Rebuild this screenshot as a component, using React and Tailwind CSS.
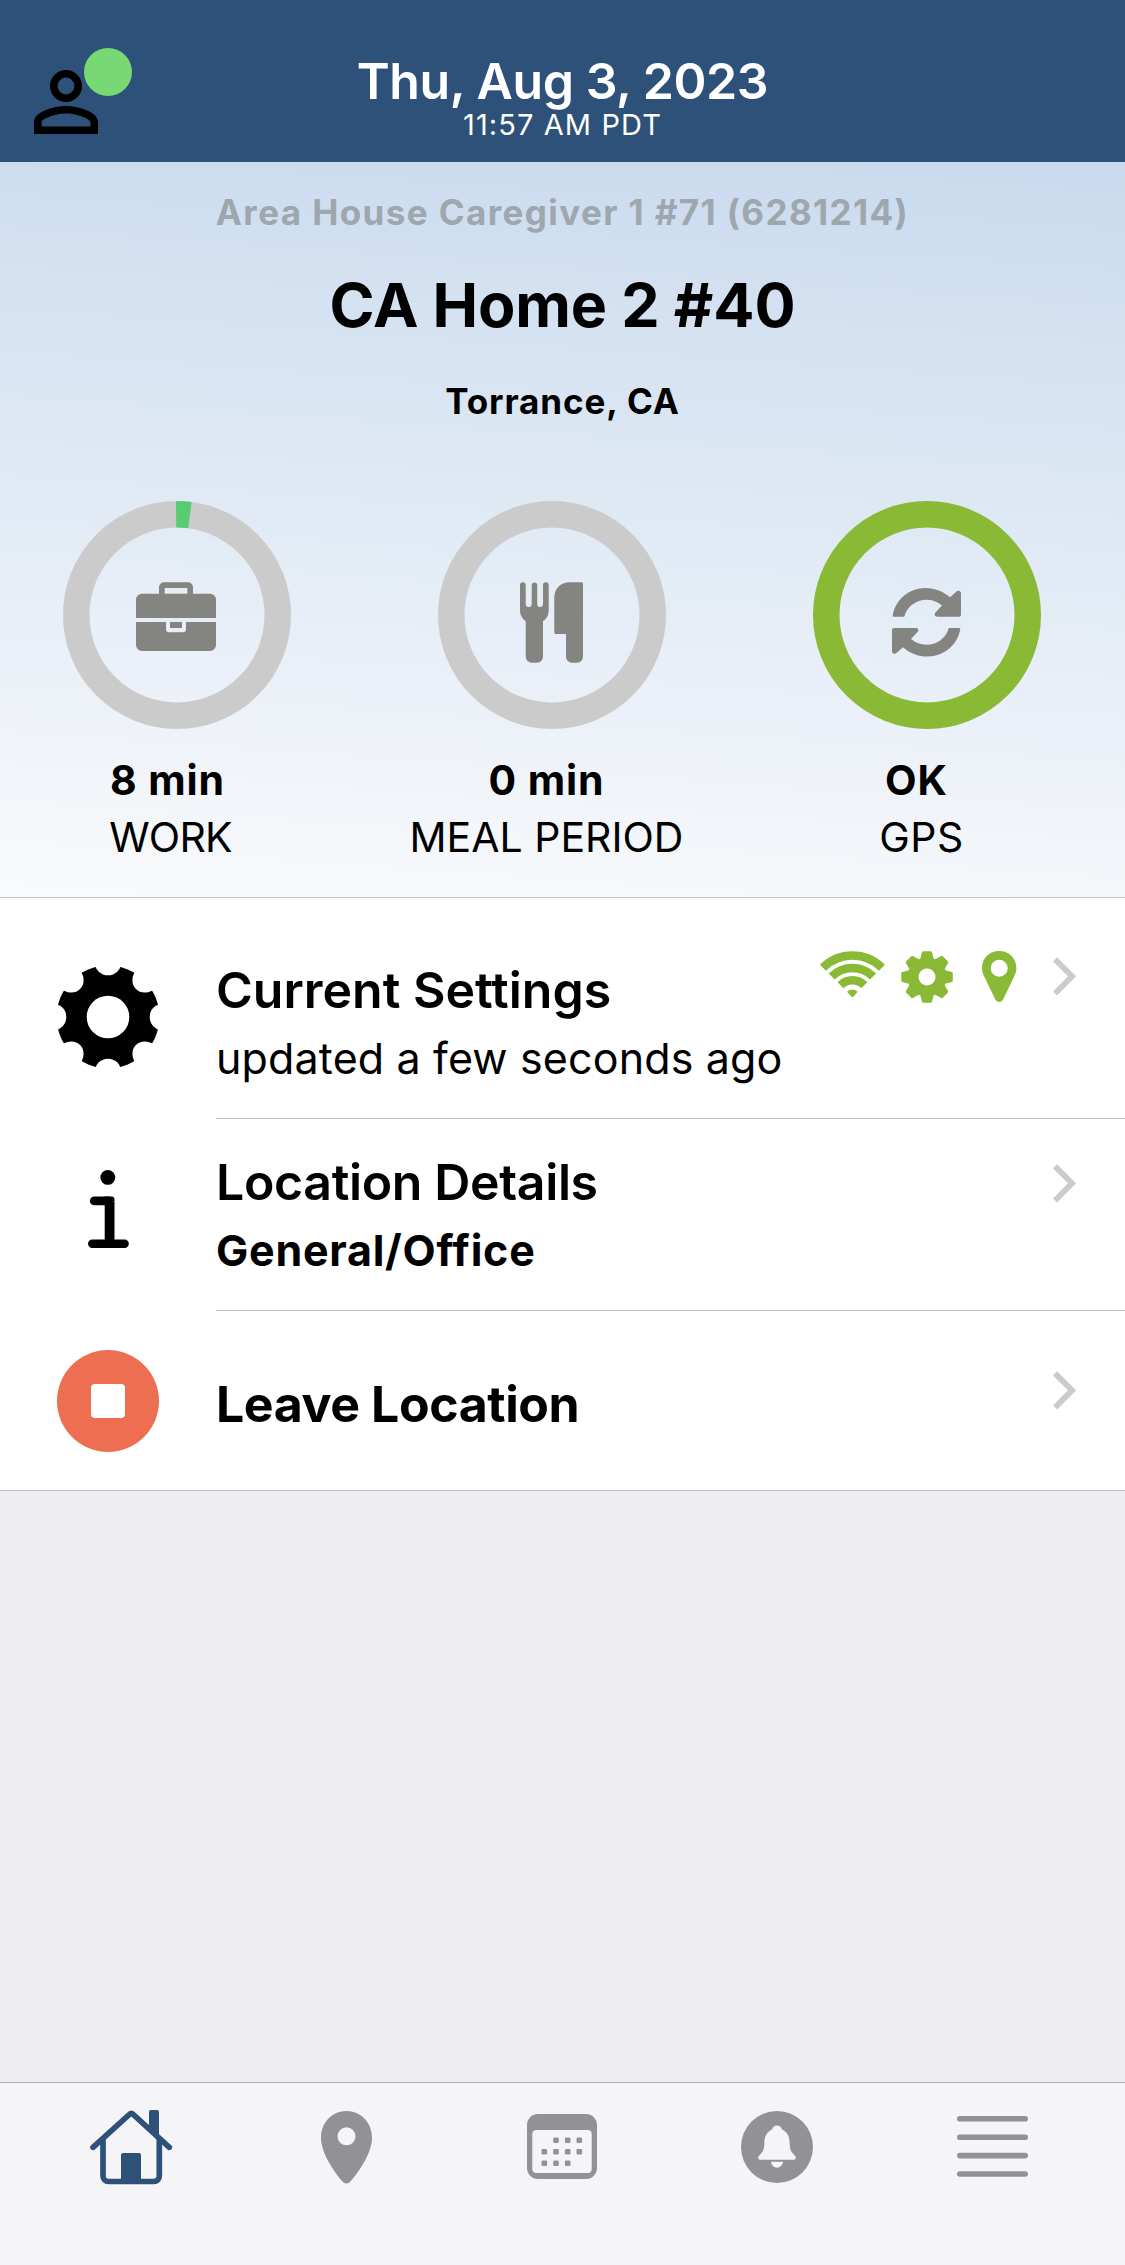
import { MdPersonOutline } from "react-icons/md";

const TEETH = [0, 45, 90, 135, 180, 225, 270, 315];

function BriefcaseShape() {
  return (
    <g fill="#848481">
      <path d="M96 93V86a5 5 0 0 1 5-4.7H125a5 5 0 0 1 5 4.7V93H124.3V87H101.7V93Z" />
      <path d="M73 117V99a6 6 0 0 1 6-6.3H147a6 6 0 0 1 6 6.3V117Z" />
      <path d="M73 121H103V128.3a3 3 0 0 0 3 3H120a3 3 0 0 0 3-3V121H153V144a6 6 0 0 1-6 6H79a6 6 0 0 1-6-6Z" />
      <rect x="107" y="121" width="12" height="6" />
    </g>
  );
}

function CutleryShape() {
  return (
    <g fill="#848481">
      <path d="M82 84.2a2.85 2.85 0 0 1 5.7 0V103a3 3 0 0 0 6 0V84.2a2.75 2.75 0 0 1 5.5 0V103a2.9 2.9 0 0 0 5.8 0V84.2a2.85 2.85 0 0 1 5.7 0V109C110.7 114.5 108.5 118 105 120V155.7a6 6 0 0 1-6 6H93.7a6 6 0 0 1-6-6V120C84.5 118 82 114.5 82 109Z" />
      <path d="M116.3 97C116.3 88 122 81.3 132 81.3H143.5a1.5 1.5 0 0 1 1.5 1.5V155.7a6 6 0 0 1-6 6H134a6 6 0 0 1-6-6V133H117.8a1.5 1.5 0 0 1-1.5-1.5Z" />
    </g>
  );
}

function SyncShape() {
  const half = "M79.7 114.5C82.5 98.5 96 87 112.5 87C122 87 130.5 90.5 137 96.3L143.8 90.3C145.5 89 148 90 148 92.5V113.7a2 2 0 0 1-2 2H124.5C121.8 115.7 120.8 113.5 122.5 111.6L129 104.5C124.5 100.7 119.5 98.8 113.5 98.8C103 98.8 94 105.5 91.2 115.7H80.7a1 1 0 0 1-1-1.2Z";
  return (
    <g fill="#848481">
      <path d={half} />
      <path d={half} transform="rotate(180 113.5 121.3)" />
    </g>
  );
}

function Ring({ color, progress, children }) {
  const length = 2 * Math.PI * 100.75;
  return (
    <svg className="w-[228px] h-[228px]" viewBox="0 0 228 228" fill="none">
      <circle cx="114" cy="114" r="100.75" stroke={color} strokeWidth="26.5" />
      {progress > 0 && (
        <circle cx="114" cy="114" r="100.75" stroke="#58cb73" strokeWidth="26.5" strokeDasharray={`${length * progress} ${length}`} transform="rotate(-90.5 114 114)" />
      )}
      {children}
    </svg>
  );
}

function BigGear() {
  return (
    <svg className="w-[104px] h-[104px]" viewBox="-52 -52 104 104">
      <mask id="gear-notches" maskUnits="userSpaceOnUse" x="-52" y="-52" width="104" height="104">
        <circle r="51.4" fill="white" />
        <circle r="21.3" fill="black" />
        {TEETH.map((a) => (
          <ellipse key={a} cx="0" cy="-54" rx="13" ry={a % 90 === 0 ? 12.3 : 14.5} fill="black" transform={`rotate(${a})`} />
        ))}
      </mask>
      <rect x="-52" y="-52" width="104" height="104" fill="black" mask="url(#gear-notches)" />
    </svg>
  );
}

function InfoIcon() {
  return (
    <svg className="w-[41px] h-[78px]" viewBox="0 0 41 78" fill="none" stroke="black">
      <circle cx="19.8" cy="7.4" r="7.4" fill="black" stroke="none" />
      <path d="M6.2 30.9H20.5" strokeWidth="8.6" strokeLinecap="round" />
      <path d="M21.6 74V31.5" strokeWidth="9.8" />
      <path d="M16.7 30.9V26.6H23.5a3 3 0 0 1 3 3V31.5Z" fill="black" stroke="none" />
      <path d="M4.2 73.8H36.6" strokeWidth="8.4" strokeLinecap="round" />
    </svg>
  );
}

function StopIcon() {
  return (
    <div className="w-[102px] h-[102px] rounded-full bg-[#ed6e51] flex items-center justify-center">
      <div className="w-[34px] h-[34px] rounded bg-white"></div>
    </div>
  );
}

function Chevron() {
  return (
    <svg className="w-[23px] h-[39px]" viewBox="0 0 23 39" fill="none">
      <path d="M2 2.3L19 19.3L2 36.5" stroke="#cbcbcb" strokeWidth="5.8" />
    </svg>
  );
}

function StatusIcons() {
  return (
    <div className="flex text-[#89b935]">
      <svg className="w-[65px] h-[51px]" viewBox="0 0 65 51" fill="none" stroke="currentColor" strokeWidth="8.5">
        <path d="M2.9 16.7A41.7 41.7 0 0 1 61.9 16.7" />
        <path d="M11.7 25.5A29.3 29.3 0 0 1 53.1 25.5" />
        <path d="M20.5 34.3A16.8 16.8 0 0 1 44.3 34.3" />
        <path d="M27 40.8Q32.4 36 37.8 40.8L33.2 45.7Q32.4 46.4 31.6 45.7Z" fill="currentColor" stroke="none" />
      </svg>
      <svg className="w-[52px] h-[52px] ml-4" viewBox="-26 -26 52 52">
        <circle r="14" fill="none" stroke="currentColor" strokeWidth="11" />
        {TEETH.map((a) => (
          <path key={a} d="M-7 -17L-5 -24.8Q-4.8 -25.8 -3.5 -25.8H3.5Q4.8 -25.8 5 -24.8L7 -17Z" fill="currentColor" transform={`rotate(${a})`} />
        ))}
      </svg>
      <svg className="w-[35px] h-[52px] ml-[29px]" viewBox="0 0 35 52">
        <path fill="currentColor" fillRule="evenodd" d="M17.2 0C7.5 0 0 7.3 0 17C0 20 .7 22.3 2 25L13.3 48.5C14.9 51.8 19.5 51.8 21.1 48.5L32.4 25C33.7 22.3 34.4 20 34.4 17C34.4 7.3 26.9 0 17.2 0ZM17.2 8.7a8.5 8.5 0 1 1 0 17a8.5 8.5 0 1 1 0-17Z" />
      </svg>
    </div>
  );
}

function HomeIcon() {
  return (
    <svg className="w-[86px] h-20 mt-px" viewBox="0 0 86 80" fill="none" stroke="#2d5179" strokeWidth="5.7">
      <path d="M5 40.3L41.3 7.5Q43.3 5.5 45.3 7.5L81.3 40.3" strokeLinecap="round" />
      <path d="M15 31V69a5.5 5.5 0 0 0 5.5 5.5H65.8a5.5 5.5 0 0 0 5.5-5.5V31" />
      <path d="M61 24V5a2 2 0 0 1 2-2H69a2 2 0 0 1 2 2V32Z" fill="#2d5179" stroke="none" />
      <path d="M33 75V48a2 2 0 0 1 2-2H51a2 2 0 0 1 2 2V75Z" fill="#2d5179" stroke="none" />
    </svg>
  );
}

function PinIcon() {
  return (
    <svg className="w-[51px] h-[73px] mt-[4.5px]" viewBox="0 0 51 73">
      <path fill="#929294" fillRule="evenodd" d="M25.5 0C11 0 0 11.5 0 27C0 41 12 60 22.3 71.2Q25.5 74 28.7 71.2C39 60 51 41 51 27C51 11.5 40 0 25.5 0ZM25.5 16.3a9 9 0 1 1 0 18a9 9 0 1 1 0-18Z" />
    </svg>
  );
}

function CalendarIcon() {
  const rows = [[29, 40.7, 52.3], [17.3, 29, 40.7, 52.3], [17.3, 29, 40.7]];
  return (
    <svg className="w-[70px] h-[65px] mt-2" viewBox="0 0 70 65" fill="#929294">
      <rect width="70" height="65" rx="11" />
      <rect x="5.3" y="16" width="59.4" height="43" rx="4" fill="#f5f5f8" />
      {rows.map((xs, r) => xs.map((x) => (
        <rect key={`${r}-${x}`} x={x - 2.8} y={23.5 + r * 11.5} width="5.6" height="5.6" rx="1.3" />
      )))}
    </svg>
  );
}

function BellIcon() {
  return (
    <svg className="w-[72px] h-[72px] mt-[4.5px]" viewBox="0 0 72 72">
      <circle cx="36" cy="36" r="36" fill="#929294" />
      <path fill="#f5f5f8" d="M36 14.5C33.5 14.5 32 15.7 30.8 18.5C26 21 23.6 25 23.4 31C23.3 38 22.5 40.5 18.5 44.2C16.5 46 16.8 48.7 19 48.7H53C55.2 48.7 55.5 46 53.5 44.2C49.5 40.5 48.7 38 48.6 31C48.4 25 46 21 41.2 18.5C40 15.7 38.5 14.5 36 14.5Z" />
      <path fill="#f5f5f8" d="M30 50.8H42C41.5 54.5 39 56.7 36 56.7C33 56.7 30.5 54.5 30 50.8Z" />
    </svg>
  );
}

function MenuIcon() {
  return (
    <svg className="w-[71px] h-[61px] mt-2.5 ml-px" viewBox="0 0 71 61" stroke="#929294" strokeWidth="5.6" strokeLinecap="round">
      <path d="M2.8 2.8H68.2M2.8 21.2H68.2M2.8 39.6H68.2M2.8 58H68.2" />
    </svg>
  );
}

const gauges = [
  { value: "8 min", label: "WORK", color: "#cbcbcb", progress: 0.022, icon: <BriefcaseShape />, valueClass: "pr-2", labelClass: "pr-0.5 tracking-[-0.8px]" },
  { value: "0 min", label: "MEAL PERIOD", color: "#cbcbcb", progress: 0, icon: <CutleryShape />, valueClass: "", labelClass: "" },
  { value: "OK", label: "GPS", color: "#89b935", progress: 0, icon: <SyncShape />, valueClass: "pr-2.5", labelClass: "tracking-[0.5px]" },
];

const tabs = [HomeIcon, PinIcon, CalendarIcon, BellIcon, MenuIcon];

export default function App() {
  return (
    <div className="flex flex-col w-full h-[2265px] bg-[#eeeef2] text-black font-['Inter','Liberation_Sans',sans-serif]">
      <header className="grid grid-cols-[1fr_auto_1fr] h-[162px] bg-[#2d5179]">
        <div className="pl-[18px] pt-[54px]">
          <div className="relative w-24 h-24">
            <MdPersonOutline className="w-24 h-24" />
            <span className="absolute left-[66px] -top-1.5 w-12 h-12 rounded-full bg-[#77d874]"></span>
          </div>
        </div>
        <div className="pt-14 text-center text-white">
          <h1 className="text-[50px] leading-[50px] font-semibold tracking-[-0.4px]">Thu, Aug 3, 2023</h1>
          <p className="text-[29px] leading-[37px] tracking-[1.1px]">11:57 AM PDT</p>
        </div>
      </header>

      <section className="h-[736px] pt-7 border-b border-[#c4c5c7] bg-[linear-gradient(184deg,#c9daee_0%,#dfe9f4_46%,#e9eff8_66%,#f9fafb_100%)]">
        <div className="text-center font-bold">
          <p className="text-[35px] leading-[45px] tracking-[1.4px] text-[#9ea6ae]">Area House Caregiver 1 #71 (6281214)</p>
          <h2 className="mt-8 text-[61px] leading-[76px] tracking-[-0.15px]">CA Home 2 #40</h2>
          <p className="mt-9 text-[35px] leading-[45px] tracking-[0.9px]">Torrance, CA</p>
        </div>
        <div className="grid grid-cols-3 mt-[77px]">
          {gauges.map((g) => (
            <div key={g.label}>
              <div className="pl-[63px]">
                <Ring color={g.color} progress={g.progress}>{g.icon}</Ring>
              </div>
              <div className="mt-[27px] pr-8 text-center text-[41px] leading-[48px]">
                <p className={`font-bold tracking-[0.9px] ${g.valueClass}`}>{g.value}</p>
                <p className={`mt-[9px] ${g.labelClass}`}>{g.label}</p>
              </div>
            </div>
          ))}
        </div>
      </section>

      <section className="pt-[29px] bg-white border-b border-[#bdbdc0]">
        <div className="flex h-48">
          <div className="w-[216px] pt-[38px] flex justify-center"><BigGear /></div>
          <div className="flex-1 flex justify-between pr-[49px] border-b border-[#c4c4c6]">
            <div className="pt-[33px] w-[604px] whitespace-nowrap">
              <h3 className="text-[50px] leading-[60px] font-semibold">Current Settings</h3>
              <p className="mt-2 text-[43px] leading-[60px] tracking-[0.15px]">updated a few seconds ago</p>
            </div>
            <div className="flex flex-1 justify-between pt-6">
              <StatusIcons />
              <div className="pt-1.5"><Chevron /></div>
            </div>
          </div>
        </div>
        <div className="flex h-48">
          <div className="w-[216px] pt-[51px] flex justify-center"><InfoIcon /></div>
          <div className="flex-1 flex justify-between pr-[49px] border-b border-[#c4c4c6]">
            <div className="pt-[33px]">
              <h3 className="text-[50px] leading-[60px] font-semibold tracking-[-0.35px]">Location Details</h3>
              <p className="mt-2 text-[43px] leading-[60px] font-bold tracking-[0.75px]">General/Office</p>
            </div>
            <div className="pt-[45px]"><Chevron /></div>
          </div>
        </div>
        <div className="flex h-[179px]">
          <div className="w-[216px] pt-[39px] flex justify-center"><StopIcon /></div>
          <div className="flex-1 flex justify-between pr-[49px]">
            <h3 className="pt-[63px] text-[50px] leading-[60px] font-bold tracking-[-0.4px]">Leave Location</h3>
            <div className="pt-[60px]"><Chevron /></div>
          </div>
        </div>
      </section>

      <nav className="flex items-start h-[183px] mt-auto pl-[23px] pr-[25px] pt-[23px] border-t border-[#b0b0b3] bg-[#f5f5f8]">
        {tabs.map((Icon, i) => (
          <div key={i} className="flex-1 flex justify-center"><Icon /></div>
        ))}
      </nav>
    </div>
  );
}
